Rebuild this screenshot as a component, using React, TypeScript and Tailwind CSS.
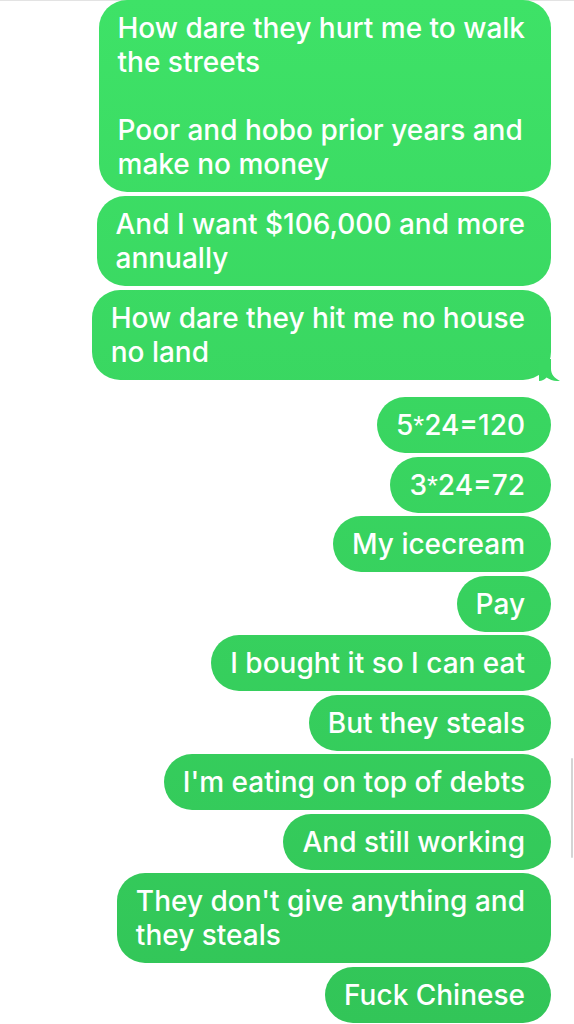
import React from "react";

const bubble =
  "relative whitespace-nowrap rounded-[28px] bg-gradient-to-b from-[#3ee267] to-[#32c558] bg-fixed pl-[19px] pr-[26px] py-[11px] text-[28px] font-medium leading-[34px] text-white";

function Star() {
  return (
    <span className="leading-none" style={{ fontFamily: "'Liberation Sans', sans-serif" }}>
      *
    </span>
  );
}

function Bubble({ children, tail = false }: { children: React.ReactNode; tail?: boolean }) {
  return (
    <div className={bubble}>
      {children}
      {tail && (
        <svg
          className="absolute bottom-[-1px] right-[-10px]"
          width="22"
          height="22"
          viewBox="0 0 22 22"
        >
          <path
            d="M0 0 L12 0 L12 10 C12 15 15 19 21 22 C16 22.3 11 21 7.5 18.5 C5.5 20.5 3 22 0 22 Z"
            fill="#3ad862"
          />
        </svg>
      )}
    </div>
  );
}

export default function App() {
  const singles: React.ReactNode[] = [
    <>5<Star />24=120</>,
    <>3<Star />24=72</>,
    "My icecream",
    "Pay",
    "I bought it so I can eat",
    "But they steals",
    "I'm eating on top of debts",
    "And still working",
  ];
  return (
    <div
      className="relative h-[1024px] w-[574px] overflow-hidden bg-white"
      style={{ fontFamily: "Inter, 'Noto Sans', sans-serif" }}
    >
      <div className="absolute left-0 right-0 top-0 h-[1px] bg-[#e3e3e3]" />
      <div className="flex flex-col items-end pr-[23px]">
        <div className="flex flex-col items-end gap-[4px]">
          <Bubble>
            How dare they hurt me to walk
            <br />
            the streets
            <br />
            <br />
            Poor and hobo prior years and
            <br />
            make no money
          </Bubble>
          <Bubble>
            And I want $106,000 and more
            <br />
            annually
          </Bubble>
          <Bubble tail>
            How dare they hit me no house
            <br />
            no land
          </Bubble>
        </div>
        <div className="mt-[17px] flex flex-col items-end gap-[3.5px]">
          {singles.map((s, i) => (
            <Bubble key={i}>{s}</Bubble>
          ))}
          <Bubble>
            They don't give anything and
            <br />
            they steals
          </Bubble>
          <Bubble>Fuck Chinese</Bubble>
        </div>
      </div>
      <div className="absolute right-[1px] top-[758px] h-[100px] w-[2px] rounded-full bg-[#d4d4d4]" />
    </div>
  );
}
